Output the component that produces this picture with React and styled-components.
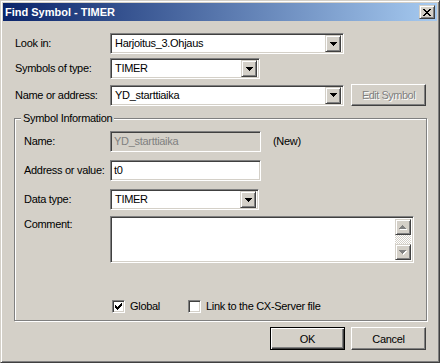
import React from "react";
import styled, { createGlobalStyle } from "styled-components";

const Global = createGlobalStyle`
  html, body { margin: 0; padding: 0; background: #d4d0c8; }
  * { box-sizing: border-box; }
`;

const Win = styled.div`
  width: 440px;
  height: 363px;
  background: #d4d0c8;
  border: 1px solid;
  border-color: #d4d0c8 #404040 #404040 #d4d0c8;
  box-shadow: inset 1px 1px #fff, inset -1px -1px #808080;
  padding: 2px;
  display: flex;
  flex-direction: column;
  font-family: "Liberation Sans", Arial, sans-serif;
  font-size: 11px;
  letter-spacing: -0.3px;
  color: #000;
`;

const TitleBar = styled.div`
  height: 18px;
  flex: none;
  display: flex;
  align-items: center;
  justify-content: space-between;
  padding: 0 2px 0 2px;
  background: linear-gradient(to right, #0a246a, #a6caf0);
  color: #fff;
  font-weight: bold;
  letter-spacing: 0;
`;

const Raised = styled.div`
  background: #d4d0c8;
  border: 1px solid;
  border-color: #d4d0c8 #404040 #404040 #d4d0c8;
  box-shadow: inset 1px 1px #fff, inset -1px -1px #808080;
  display: flex;
  align-items: center;
  justify-content: center;
`;

const CloseBtn = styled(Raised)`
  width: 16px;
  height: 14px;
  padding-top: 0;
`;

const Client = styled.div`
  flex: 1;
  display: flex;
  flex-direction: column;
  padding: 12px 10px 0 11px;
`;

const Row = styled.div`
  display: flex;
  align-items: ${(p) => p.$align || "center"};
  margin-top: ${(p) => p.$mt || 0}px;
  padding-left: ${(p) => p.$pl || 0}px;
`;

const Label = styled.div`
  width: ${(p) => p.$w}px;
  flex: none;
  line-height: 13px;
  padding-top: ${(p) => p.$pt || 0}px;
`;

const Sunken = styled.div`
  background: ${(p) => (p.$disabled ? "#d4d0c8" : "#fff")};
  color: ${(p) => (p.$disabled ? "#808080" : "#000")};
  border: 1px solid;
  border-color: #808080 #fff #fff #808080;
  box-shadow: inset 1px 1px #404040, inset -1px -1px #d4d0c8;
  padding: 2px;
`;

const Field = styled(Sunken)`
  width: ${(p) => p.$w}px;
  height: ${(p) => p.$h || 21}px;
  display: flex;
  align-items: center;
  justify-content: space-between;
  flex: none;
`;

const FieldText = styled.span`
  padding-left: ${(p) => p.$pl ?? 2}px;
  line-height: 13px;
  white-space: nowrap;
`;

const DropBtn = styled(Raised)`
  width: 16px;
  height: 17px;
  flex: none;
`;

const PushButton = styled.div`
  width: 75px;
  height: ${(p) => p.$h || 23}px;
  flex: none;
  margin-left: ${(p) => p.$ml || 0}px;
  display: flex;
  align-items: center;
  justify-content: center;
  background: #d4d0c8;
  border: 1px solid;
  border-color: ${(p) => (p.$default ? "#000" : "#fff #404040 #404040 #fff")};
  box-shadow: ${(p) =>
    p.$default
      ? "inset 1px 1px #fff, inset -1px -1px #404040, inset -2px -2px #808080, inset 2px 2px #d4d0c8"
      : "inset -1px -1px #808080, inset 1px 1px #d4d0c8"};
  color: ${(p) => (p.$disabled ? "#808080" : "#000")};
  text-shadow: ${(p) => (p.$disabled ? "1px 1px 0 #fff" : "none")};
  letter-spacing: ${(p) => (p.$disabled ? "-0.5px" : "-0.3px")};
`;

const Group = styled.div`
  position: relative;
  margin-top: 12px;
  border: 1px solid #808080;
  box-shadow: 1px 1px 0 #fff, inset 1px 1px 0 #fff;
  padding: 12px 9px 7px 9px;
  display: flex;
  flex-direction: column;
`;

const Legend = styled.div`
  position: absolute;
  top: -7px;
  left: 6px;
  padding: 0 2px;
  background: #d4d0c8;
  line-height: 13px;
`;

const Note = styled.span`
  margin-left: 12px;
  line-height: 13px;
`;

const Memo = styled(Sunken)`
  width: 304px;
  height: 47px;
  flex: none;
  display: flex;
  justify-content: flex-end;
`;

const ScrollBar = styled.div`
  width: 16px;
  display: flex;
  flex-direction: column;
`;

const ScrollArrow = styled(Raised)`
  width: 16px;
  height: 16px;
  flex: none;
`;

const Track = styled.div`
  flex: 1;
  background: repeating-conic-gradient(#fff 0 25%, #d4d0c8 0 50%) 0 0 / 2px 2px;
`;

const Checks = styled.div`
  display: flex;
  align-items: center;
  margin-top: 37px;
  padding-left: 88px;
`;

const CheckItem = styled.div`
  display: flex;
  align-items: center;
  gap: 5px;
  width: ${(p) => (p.$w ? `${p.$w}px` : "auto")};
  line-height: 13px;
`;

const CheckBox = styled(Sunken)`
  width: 13px;
  height: 13px;
  padding: 0;
  display: flex;
  align-items: center;
  justify-content: center;
  flex: none;
`;

const Buttons = styled.div`
  display: flex;
  justify-content: flex-end;
  gap: 6px;
  margin-top: 6px;
  margin-right: 1px;
`;

const Px = ({ w, h, d, fill = "#000", shadow }) => (
  <svg width={w + (shadow ? 1 : 0)} height={h + (shadow ? 1 : 0)} shapeRendering="crispEdges" style={{ display: "block" }}>
    {shadow && <path d={d} fill={shadow} transform="translate(1 1)" />}
    <path d={d} fill={fill} />
  </svg>
);

const DOWN = "M0 0h7v1h-7z M1 1h5v1h-5z M2 2h3v1h-3z M3 3h1v1h-1z";
const UP = "M3 0h1v1h-1z M2 1h3v1h-3z M1 2h5v1h-5z M0 3h7v1h-7z";
const CHECK =
  "M6 0h1v1h-1z M5 1h2v1h-2z M0 2h1v1h-1z M4 2h3v1h-3z M0 3h2v1h-2z M3 3h3v1h-3z M0 4h5v1h-5z M1 5h3v1h-3z M2 6h1v1h-1z";
const XMARK =
  "M0 0h2v1h-2z M6 0h2v1h-2z M1 1h2v1h-2z M5 1h2v1h-2z M2 2h4v1h-4z M3 3h2v1h-2z M2 4h4v1h-4z M1 5h2v1h-2z M5 5h2v1h-2z M0 6h2v1h-2z M6 6h2v1h-2z";

const Combo = ({ w, text }) => (
  <Field $w={w}>
    <FieldText>{text}</FieldText>
    <DropBtn>
      <Px w={7} h={4} d={DOWN} />
    </DropBtn>
  </Field>
);

export default function App() {
  return (
    <>
      <Global />
      <Win>
        <TitleBar>
          <span>Find Symbol - TIMER</span>
          <CloseBtn>
            <Px w={8} h={7} d={XMARK} />
          </CloseBtn>
        </TitleBar>
        <Client>
          <Row $pl={1}>
            <Label $w={95}>Look in:</Label>
            <Combo w={234} text="Harjoitus_3.Ohjaus" />
          </Row>
          <Row $pl={1} $mt={4}>
            <Label $w={95}>Symbols of type:</Label>
            <Combo w={150} text="TIMER" />
          </Row>
          <Row $pl={1} $mt={5}>
            <Label $w={95}>Name or address:</Label>
            <Combo w={234} text="YD_starttiaika" />
            <PushButton $disabled $ml={7} $h={22}>
              Edit Symbol
            </PushButton>
          </Row>

          <Group>
            <Legend>Symbol Information</Legend>
            <Row>
              <Label $w={86}>Name:</Label>
              <Field $w={151} $disabled>
                <FieldText $pl={1}>YD_starttiaika</FieldText>
              </Field>
              <Note>(New)</Note>
            </Row>
            <Row $mt={8}>
              <Label $w={86}>Address or value:</Label>
              <Field $w={151}>
                <FieldText $pl={1}>t0</FieldText>
              </Field>
            </Row>
            <Row $mt={8}>
              <Label $w={86}>Data type:</Label>
              <Combo w={149} text="TIMER" />
            </Row>
            <Row $mt={6} $align="flex-start">
              <Label $w={86} $pt={2}>
                Comment:
              </Label>
              <Memo>
                <ScrollBar>
                  <ScrollArrow>
                    <Px w={7} h={4} d={UP} fill="#808080" shadow="#fff" />
                  </ScrollArrow>
                  <Track />
                  <ScrollArrow>
                    <Px w={7} h={4} d={DOWN} fill="#808080" shadow="#fff" />
                  </ScrollArrow>
                </ScrollBar>
              </Memo>
            </Row>
            <Checks>
              <CheckItem $w={76}>
                <CheckBox>
                  <Px w={7} h={7} d={CHECK} />
                </CheckBox>
                <span>Global</span>
              </CheckItem>
              <CheckItem>
                <CheckBox />
                <span>Link to the CX-Server file</span>
              </CheckItem>
            </Checks>
          </Group>

          <Buttons>
            <PushButton $default>OK</PushButton>
            <PushButton>Cancel</PushButton>
          </Buttons>
        </Client>
      </Win>
    </>
  );
}
